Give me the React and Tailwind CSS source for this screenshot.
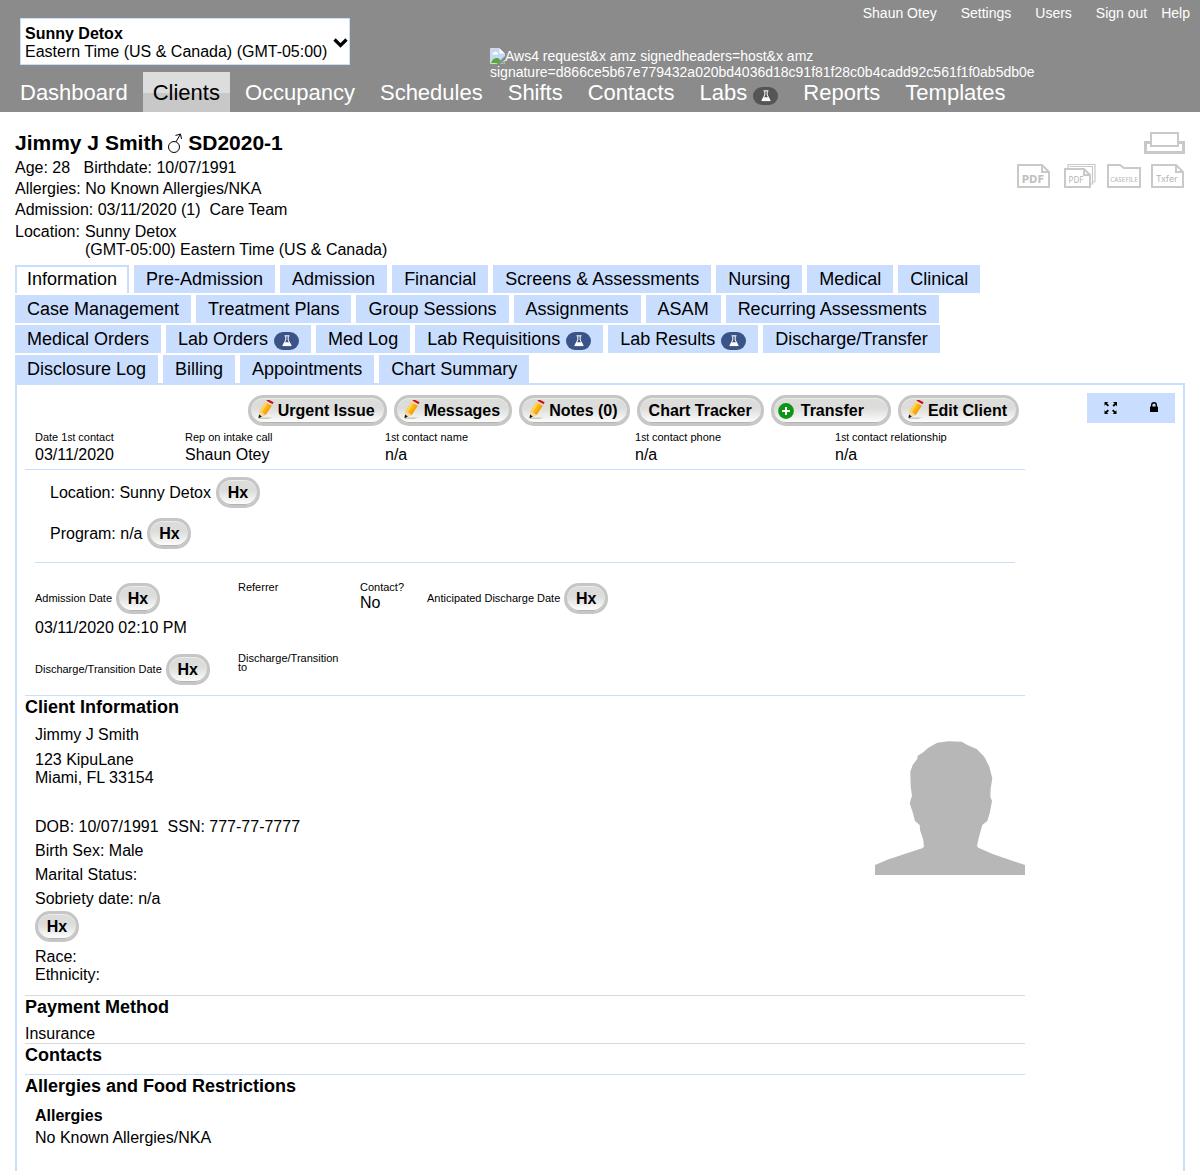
import React from "react";

const FlaskBadge = ({ dark }) => (
  <span
    className={
      dark
        ? "inline-flex h-[18px] w-[25px] items-center justify-center rounded-full bg-[#555555]"
        : "inline-flex h-[18px] w-[25px] items-center justify-center rounded-full bg-[#3b5488]"
    }
  >
    <svg width="12" height="12" viewBox="0 0 12 12" aria-hidden="true">
      <path d="M3.5 0.8h5M4.8 1v4L1.8 10.6h8.4L7.2 5V1" fill="none" stroke="#fff" strokeWidth="1" />
      <path d="M3.6 7.2h4.8l1.8 3.6H1.8z" fill="#fff" />
    </svg>
  </span>
);

const Pencil = () => (
  <svg width="20" height="22" viewBox="1 2 20 22" aria-hidden="true">
    <path d="M4 19.6h13.500l-4 1.200H4z" fill="#bdbdbd" />
    <path d="M4.600 13L10.600 4l6.200 3.400-6.200 9.600-6.900 3z" fill="#fdb515" />
    <path d="M4.600 13L10.600 4l2.100 1.100L6.900 14.300z" fill="#ffd559" />
    <path d="M8.800 15.700l6.100-9.400 1.900 1.100-6.200 9.600z" fill="#f6a30d" />
    <path d="M4.600 13l6 4-6.900 3z" fill="#f3d9ae" />
    <path d="M4.100 16.600l2.700 1.900-3.300 1.700z" fill="#111" />
    <path d="M10.600 4l.8-1.300 6.200 3.400-.8 1.300z" fill="#e8e8e8" />
    <path d="M11.400 2.800l1.200-1.800 6 3.300-1.100 1.900z" fill="#cc1119" />
  </svg>
);

const Plus = () => (
  <svg width="16" height="16" viewBox="0 0 16 16" aria-hidden="true">
    <circle cx="8" cy="8" r="7.9" fill="#0c9614" />
    <path d="M8 4v8M4 8h8" stroke="#fff" strokeWidth="2" />
  </svg>
);

const pill =
  "flex h-[31px] cursor-pointer items-center rounded-[15px] border-[3px] border-[#c6c6c6] bg-linear-to-b from-[#dcdcda] from-40% to-white text-[16px] font-bold whitespace-nowrap shadow-[inset_0_1px_0_#ececec,inset_0_-1px_0_#b4b4b4]";

const Hx = () => (
  <button type="button" className={`${pill} w-11 justify-center`}>
    Hx
  </button>
);

const nav = ["Dashboard", "Clients", "Occupancy", "Schedules", "Shifts", "Contacts", "Labs", "Reports", "Templates"];

const tabRows = [
  ["Information", "Pre-Admission", "Admission", "Financial", "Screens & Assessments", "Nursing", "Medical", "Clinical"],
  ["Case Management", "Treatment Plans", "Group Sessions", "Assignments", "ASAM", "Recurring Assessments"],
  ["Medical Orders", "Lab Orders", "Med Log", "Lab Requisitions", "Lab Results", "Discharge/Transfer"],
  ["Disclosure Log", "Billing", "Appointments", "Chart Summary"],
];
const withFlask = ["Lab Orders", "Lab Requisitions", "Lab Results"];

const intake = [
  ["Date ", "st", " contact", "03/11/2020", "w-[150px]"],
  ["Rep on intake call", "", "", "Shaun Otey", "w-[200px]"],
  ["", "st", " contact name", "n/a", "w-[250px]"],
  ["", "st", " contact phone", "n/a", "w-[200px]"],
  ["", "st", " contact relationship", "n/a", "w-[190px]"],
];

const Header = () => (
  <header className="bg-[#8b8b8b] text-white">
    <div className="flex h-[72px] items-start">
      <button
        type="button"
        className="mt-[18px] ml-5 flex h-[47px] w-[330px] shrink-0 items-center justify-between border border-[#c9deff] bg-white pt-[2px] pr-px pl-1 text-left text-[16px] leading-[18px] text-black"
      >
        <span className="whitespace-nowrap">
          <b>Sunny Detox</b>
          <br />
          Eastern Time (US &amp; Canada) (GMT-05:00)
        </span>
        <svg className="shrink-0" width="15" height="10" viewBox="0 0 15 10" aria-hidden="true">
          <path d="M1.5 1.5l6 6 6-6" fill="none" stroke="#000" strokeWidth="3.2" />
        </svg>
      </button>
      <div className="mt-12 ml-[140px] w-0 text-[14px] leading-4 whitespace-nowrap">
        <svg className="inline-block align-[-3px]" width="15" height="16" viewBox="0 0 15 16" aria-hidden="true">
          <path d="M.5 .5h9l5 5v10H.5z" fill="#c3d9f7" stroke="#d9d9d9" />
          <path d="M9.5 .5v5h5z" fill="#fff" />
          <path d="M2.5 6.5a1.6 1.6 0 011.6-2 2 2 0 013.6.6 1 1 0 01.3 1.4z" fill="#fff" />
          <path d="M1 15c1-3.500 4-5.500 6.500-5 2 .3 3 2 3.500 5z" fill="#4fae30" />
          <path d="M6.500 16l8.500-8v3.500L10.500 16z" fill="#8b8b8b" />
          <path d="M11.500 15.500l3-2.500v2.500z" fill="#4fae30" />
        </svg>
        Aws4 request&amp;x amz signedheaders=host&amp;x amz
        <br />
        signature=d866ce5b67e779432a020bd4036d18c91f81f28c0b4cadd92c561f1f0ab5db0e
      </div>
      <nav className="mt-[5px] mr-[10px] ml-auto flex text-[14px] leading-4">
        <a href="#" className="mr-6">Shaun Otey</a>
        <a href="#" className="mr-6">Settings</a>
        <a href="#" className="mr-6">Users</a>
        <a href="#" className="mr-[14px]">Sign out</a>
        <a href="#">Help</a>
      </nav>
    </div>
    <nav className="ml-[10px] flex h-10 gap-[5px] text-[22px]">
      {nav.map((n) => (
        <a
          key={n}
          href="#"
          className={
            n === "Clients"
              ? "flex items-center bg-linear-to-b from-[#dddddd] from-52% to-[#c8c8c8] to-52% px-[10px] text-black"
              : "flex items-center gap-[6px] px-[10px]"
          }
        >
          {n}
          {n === "Labs" && (
            <span className="flex pt-2">
              <FlaskBadge dark />
            </span>
          )}
        </a>
      ))}
    </nav>
  </header>
);

const Printer = () => (
  <svg width="41" height="22" viewBox="0 0 41 22" fill="none" stroke="#c9c9c9" role="img" aria-label="Print">
    <path d="M7 10.500H1.500v10h38v-10H34" strokeWidth="3" />
    <path d="M7 1h27v13H7z" strokeWidth="2" />
  </svg>
);

const Doc = ({ children }) => (
  <svg width="34" height="25" viewBox="0 0 34 25" fill="none" stroke="#c9c9c9" strokeWidth="2">
    <path d="M1 1h24l7 7v15H1z" />
    <path d="M25 1v7h7" />
    {children}
  </svg>
);

const iconText = { fill: "#b4b4b4", stroke: "none", textAnchor: "middle", fontFamily: "'Noto Sans', sans-serif" };
const iconBold = { ...iconText, fill: "#c0c0c0", fontFamily: "'DejaVu Sans', sans-serif", fontWeight: "700" };

const Chart = () => (
  <section className="flex justify-between">
    <div className="text-[16px]">
      <h1 className="flex h-6 items-center gap-[5px] text-[21px] font-bold">
        <span>Jimmy J Smith</span>
        <svg width="15" height="20" viewBox="0 0 15 20" fill="none" stroke="#000" role="img" aria-label="Male">
          <circle cx="6" cy="14" r="5.500" />
          <path d="M8 8.800L12.500 1M7.500 2.500l5-1.500 1 5" />
        </svg>
        <span>SD2020-1</span>
      </h1>
      <div className="pt-[2px] leading-[21px]">
        <p className="whitespace-pre">Age: 28   Birthdate: 10/07/1991</p>
        <p>Allergies: No Known Allergies/NKA</p>
        <p className="whitespace-pre">
          Admission: 03/11/2020 (1)  <a href="#">Care Team</a>
        </p>
      </div>
      <div className="flex gap-[5px] pt-[3px] leading-[18px]">
        <span>Location:</span>
        <p>
          Sunny Detox
          <br />
          (GMT-05:00) Eastern Time (US &amp; Canada)
        </p>
      </div>
    </div>
    <div className="flex flex-col items-end gap-[10px] pt-px">
      <a href="#"><Printer /></a>
      <div className="flex gap-[10px]">
        <a href="#" aria-label="PDF">
          <Doc>
            <text x="16" y="19" fontSize="10" {...iconBold}>PDF</text>
          </Doc>
        </a>
        <a href="#" aria-label="PDF set" className="ml-[3px]">
          <svg width="33" height="25" viewBox="0 0 33 25" fill="none" stroke="#c9c9c9">
            <path d="M4 4V.5h27v17.500M6 3V2.500h22.500V20h-1.500M31 18h-3" strokeWidth="1.200" />
            <path d="M1 5h19l6 6v12H1z" strokeWidth="2" />
            <path d="M20 5v6h6" strokeWidth="2" />
            <text x="12" y="19" fontSize="8" {...iconText}>PDF</text>
          </svg>
        </a>
        <a href="#" aria-label="Casefile">
          <svg width="34" height="25" viewBox="0 0 34 25" fill="none" stroke="#c9c9c9">
            <path d="M1 1h12l4 3h16v19H1z" strokeWidth="2" />
            <text x="17" y="18" fontSize="6.4" {...iconText}>CASEFILE</text>
          </svg>
        </a>
        <a href="#" aria-label="Txfer">
          <Doc>
            <text x="16" y="18" fontSize="9" {...iconText}>Txfer</text>
          </Doc>
        </a>
      </div>
    </div>
  </section>
);

const Tabs = () => (
  <nav className="mt-[6px] flex flex-col gap-[2px] text-[18px]">
    {tabRows.map((row) => (
      <div key={row[0]} className="flex gap-[5px]">
        {row.map((t) => (
          <a
            key={t}
            href="#"
            className={
              t === "Information"
                ? "flex h-7 items-center border-2 border-b-0 border-[#c9deff] px-[10px] pb-[2px]"
                : "flex h-7 items-center gap-[6px] bg-[#c9deff] px-3 whitespace-nowrap"
            }
          >
            {t}
            {withFlask.includes(t) && (
              <span className="flex pt-1">
                <FlaskBadge />
              </span>
            )}
          </a>
        ))}
      </div>
    ))}
  </nav>
);

const Actions = () => (
  <div className="flex justify-end gap-[7px] pr-[6px]">
    {["Urgent Issue", "Messages", "Notes (0)"].map((t) => (
      <button key={t} type="button" className={`${pill} gap-[2px] pr-[9px] pl-[5px]`}>
        <Pencil />
        {t}
      </button>
    ))}
    <button type="button" className={`${pill} px-[9px]`}>Chart Tracker</button>
    <button type="button" className={`${pill} gap-[7px] pr-6 pl-1`}>
      <Plus />
      Transfer
    </button>
    <button type="button" className={`${pill} gap-[2px] pr-[9px] pl-[5px]`}>
      <Pencil />
      Edit Client
    </button>
  </div>
);

const heading = "text-[18px] leading-[22px] font-bold";

export default function App() {
  return (
    <div className="flex min-h-screen flex-col bg-white font-['Liberation_Sans',Arial,sans-serif] text-black">
      <Header />
      <main className="flex flex-1 flex-col px-[15px] pt-[19px]">
        <Chart />
        <Tabs />
        <div className="flex flex-1 items-start justify-between border-2 border-b-0 border-[#c9deff] px-2 pt-2 pb-6 text-[16px] leading-[18px]">
          <div className="w-full max-w-[1000px] pt-[2px]">
            <Actions />
            <dl className="flex border-b border-[#c9deff] pt-1 pb-[5px] pl-[10px]">
              {intake.map(([a, sup, b, v, w]) => (
                <div key={a + b} className={w}>
                  <dt className="h-[14px] text-[11px] leading-[14px]">
                    {a}
                    {sup && (
                      <>
                        1<span className="text-[10px] leading-none">{sup}</span>
                      </>
                    )}
                    {b}
                  </dt>
                  <dd className="mt-[2px]">{v}</dd>
                </div>
              ))}
            </dl>
            <div className="mx-[10px] flex flex-col gap-[10px] border-b border-[#c9deff] pt-[7px] pb-[13px] pl-[15px]">
              <div className="flex items-center gap-[5px]">Location: Sunny Detox <Hx /></div>
              <div className="flex items-center gap-[5px]">Program: n/a <Hx /></div>
            </div>
            <div className="flex border-b border-[#c9deff] pt-5 pb-[10px] pl-[10px]">
              <div className="w-[203px]">
                <div className="flex items-center gap-1 text-[11px]"><span className="pb-[2px]">Admission Date</span> <Hx /></div>
                <p className="mt-[5px]">03/11/2020 02:10 PM</p>
                <div className="mt-[17px] flex items-center gap-1 text-[11px]"><span className="pb-[2px]">Discharge/Transition Date</span> <Hx /></div>
              </div>
              <div className="w-[122px] text-[11px] leading-[9px]">
                <p>Referrer</p>
                <p className="mt-[62px]">Discharge/Transition<br />to</p>
              </div>
              <div className="w-[67px]">
                <p className="text-[11px] leading-[9px]">Contact?</p>
                <p className="mt-[2px]">No</p>
              </div>
              <div className="flex h-[31px] items-center gap-1 text-[11px]"><span className="pb-[2px]">Anticipated Discharge Date</span> <Hx /></div>
            </div>
            <section className="border-b border-[#d9d9d9] pb-[11px]">
              <h2 className={heading}>Client Information</h2>
              <div className="flex items-start justify-between pt-2 pl-[10px]">
                <div>
                  <p>Jimmy J Smith</p>
                  <p className="mt-[7px]">123 KipuLane<br />Miami, FL 33154</p>
                  <div className="mt-7 leading-6">
                    <p className="whitespace-pre">DOB: 10/07/1991  SSN: 777-77-7777</p>
                    <p>Birth Sex: Male</p>
                    <p>Marital Status:</p>
                    <p>Sobriety date: n/a</p>
                  </div>
                  <Hx />
                  <p className="mt-[6px]">Race:<br />Ethnicity:</p>
                </div>
                <svg className="mt-[15px]" width="150" height="134" viewBox="0 0 150 134" role="img" aria-label="Client photo">
                  <path
                    d="M0 134V124L13 118.500 31 112.500 47.300 107.300 49 105.700 48.300 99 45 89 44.700 84 40 80 37.700 71.300 34.700 62.300 37 54.700 35.700 45.700 35.300 30.700 37.700 24 42.300 18 42.700 14.700 48.300 11.300 53.300 6.700 62.300 1.700 73.300 .3 86.700 .7 92.300 4 101.700 8 109.300 15.700 114.300 25.700 117.300 37.300 115.700 47.300 115.300 55.700 117 60 114.700 72.300 112.300 80 107.300 84 104 95.700 102 104.700 103.300 106.700 118.300 113.300 150 124V134z"
                    fill="#b7b7b7"
                  />
                </svg>
              </div>
            </section>
            <section className="border-b border-[#d9d9d9]">
              <h2 className={heading}>Payment Method</h2>
              <p className="mt-[7px]">Insurance</p>
            </section>
            <section className="border-b border-[#c9deff] pb-2">
              <h2 className={heading}>Contacts</h2>
            </section>
            <section>
              <h2 className={heading}>Allergies and Food Restrictions</h2>
              <div className="pt-[10px] pl-[10px]">
                <h3 className="font-bold">Allergies</h3>
                <p className="mt-1">No Known Allergies/NKA</p>
              </div>
            </section>
          </div>
          <div className="flex h-[30px] w-[88px] shrink-0 items-center justify-around bg-[#c9deff]">
            <button type="button" aria-label="Expand" className="cursor-pointer">
              <svg width="13" height="12" viewBox="0 0 13 12" aria-hidden="true">
                <path d="M0 0h4.200L3 1.200 5 3.200 3.700 4.500l-2-2L.5 3.700V0zM13 0v4.200l-1.200-1.200-2 1.700L8.500 3.300l2-1.900L9 0zM.5 12V8.200l1.200 1.200 1.900-1.900L5 8.800l-2 2L4.200 12zM12.500 12H8.800L10 10.800 8 8.800l1.400-1.300 1.900 1.900 1.200-1.200z" />
              </svg>
            </button>
            <button type="button" aria-label="Lock" className="cursor-pointer pb-[3px]">
              <svg width="8" height="10" viewBox="0 0 8 10" aria-hidden="true">
                <rect y="4.500" width="8" height="5.500" rx="0.500" />
                <path d="M1.700 5V3a2.300 2.300 0 014.600 0v2" fill="none" stroke="#000" strokeWidth="1.400" />
              </svg>
            </button>
          </div>
        </div>
      </main>
    </div>
  );
}
